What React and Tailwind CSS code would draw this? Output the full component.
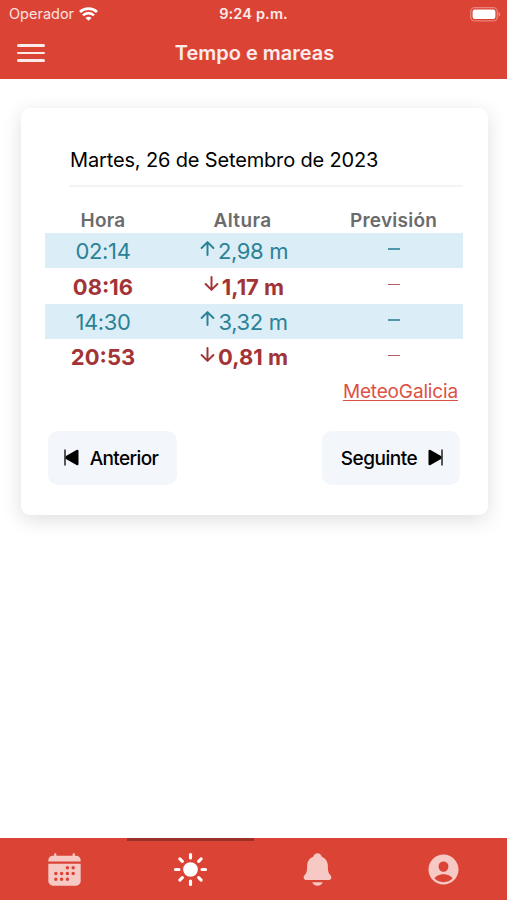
import { IoArrowDown, IoArrowUp, IoCalendar, IoNotifications, IoPersonCircle, IoSunny } from 'react-icons/io5';

const TIDES = [
  { time: '02:14', height: '2,98 m', high: true },
  { time: '08:16', height: '1,17 m', high: false },
  { time: '14:30', height: '3,32 m', high: true },
  { time: '20:53', height: '0,81 m', high: false },
];

const TABS = [
  { id: 'calendar', Icon: IoCalendar, pad: 'pl-[2px]' },
  { id: 'weather', Icon: IoSunny, pad: 'pl-px' },
  { id: 'alerts', Icon: IoNotifications, pad: 'pl-px' },
  { id: 'profile', Icon: IoPersonCircle, pad: 'pr-px' },
];

function WifiIcon() {
  return (
    <svg width="19" height="14" viewBox="0 0 19 14" fill="none" stroke="white" strokeWidth="2.6">
      <path d="M1 5C5.6 0.5 13.4 0.5 18 5" />
      <path d="M4 8.4C7.2 5.4 11.8 5.4 15 8.4" />
      <path d="M6.5 10.9C8.2 9.2 10.8 9.2 12.5 10.9L9.5 13.8Z" fill="white" stroke="none" />
    </svg>
  );
}

function BatteryIcon() {
  return (
    <svg width="31" height="15" viewBox="0 0 31 15">
      <rect x="0.7" y="0.7" width="26.6" height="13.2" rx="4" fill="none" stroke="white" strokeOpacity="0.35" strokeWidth="1.3" />
      <rect x="2.6" y="2.6" width="22.8" height="9.4" rx="2.2" fill="white" />
      <path d="M28.7 5C30.6 5.6 30.6 9 28.7 9.6Z" fill="white" fillOpacity="0.45" />
    </svg>
  );
}

function SkipIcon({ className = '' }) {
  return (
    <svg className={className} width="15" height="17" viewBox="0 0 15 17">
      <path d="M1 0.5V16.5" stroke="black" strokeWidth="1.3" />
      <path d="M2 7L12.5 1Q14.5 0.2 14.5 2V15Q14.5 16.8 12.5 16L2 10Q0.6 8.5 2 7Z" />
    </svg>
  );
}

export default function App() {
  return (
    <div className="h-screen flex flex-col bg-white overflow-hidden font-['Inter',sans-serif] text-black">
      <header className="h-[79px] shrink-0 bg-[#db4335] text-white">
        <div className="h-7 grid grid-cols-3 items-center pl-[9px] pr-[6px]">
          <div className="flex items-center gap-[5px]">
            <span className="text-[14.5px] text-white/85">Operador</span>
            <WifiIcon />
          </div>
          <div className="-ml-[3px] text-center text-[14.5px] font-semibold text-white/90 tracking-[0.15px] whitespace-nowrap">9:24 p.m.</div>
          <div className="flex justify-end">
            <BatteryIcon />
          </div>
        </div>
        <div className="h-[50px] grid grid-cols-[60px_1fr_60px] items-center">
          <button className="ml-[17px] w-7 flex flex-col gap-[5px]">
            <span className="h-[2.5px] w-full rounded-full bg-white/90" />
            <span className="h-[2.5px] w-full rounded-full bg-white/90" />
            <span className="h-[2.5px] w-full rounded-full bg-white/90" />
          </button>
          <h1 className="pl-[2px] text-center text-[20px] font-semibold text-white/90">Tempo e mareas</h1>
        </div>
      </header>

      <main className="flex-1 pt-[29px] pl-[21px] pr-[19px]">
        <section className="h-[407px] rounded-[9px] bg-white pl-6 pr-[25px] shadow-[0_5px_20px_rgba(0,0,0,0.13)]">
          <div className="ml-[24px] h-[79px] pt-[37px] border-b-2 border-[#f4f4f5]">
            <h2 className="pl-px text-[20px] leading-[30px] tracking-[-0.15px] whitespace-nowrap">Martes, 26 de Setembro de 2023</h2>
          </div>

          <table className="mt-[21px] w-full table-fixed text-center">
            <thead>
              <tr className="h-[25px] text-[19px] leading-[25px] text-[#6b6b6b]">
                <th className="w-[116px] font-semibold tracking-[0.2px]">Hora</th>
                <th className="w-[163px] font-semibold tracking-[0.4px]">Altura</th>
                <th className="font-semibold tracking-[0.25px]">Previsión</th>
              </tr>
            </thead>
            <tbody>
              {TIDES.map(({ time, height, high }) => {
                const Arrow = high ? IoArrowUp : IoArrowDown;
                return (
                  <tr key={time} className={`h-[35.4px] text-[22px] leading-[35px] ${high ? 'bg-[#dbedf6] text-[#2b8296] tracking-[-0.35px]' : 'font-bold text-[#a23437]'}`}>
                    <td className="pt-px leading-[34px]">{time}</td>
                    <td className="pt-px leading-[34px]">
                      <div className="flex items-center justify-center">
                        <Arrow className="size-[21px] -mt-[6px]" />
                        <span>{height}</span>
                      </div>
                    </td>
                    <td>
                      <div className={`mx-auto mb-[3px] h-[1.5px] w-3 ${high ? 'bg-[#2b8296]/80' : 'bg-[#a23437]/80'}`} />
                    </td>
                  </tr>
                );
              })}
            </tbody>
          </table>

          <div className="h-[34px] pr-[5px] text-right">
            <a href="#" className="text-[19px] leading-[33px] tracking-[-0.15px] text-[#dd5145] underline decoration-1 underline-offset-2">MeteoGalicia</a>
          </div>

          <div className="mt-[22px] flex justify-between px-[3px]">
            <button className="flex h-[54px] w-[129px] items-center justify-center gap-[11px] rounded-[10px] bg-[#f3f6fa] pr-[3px] text-[19px] font-medium tracking-[-0.6px]">
              <SkipIcon />
              <span className="pt-[3px]">Anterior</span>
            </button>
            <button className="flex h-[54px] w-[138px] items-center justify-center gap-[11px] rounded-[10px] bg-[#f3f6fa] pl-[2px] text-[19px] font-medium tracking-[-0.5px]">
              <span className="pt-[3px]">Seguinte</span>
              <SkipIcon className="-scale-x-100" />
            </button>
          </div>
        </section>
      </main>

      <nav className="h-[62px] shrink-0 grid grid-cols-4 bg-[#db4335]">
        {TABS.map(({ id, Icon, pad }) => (
          <button
            key={id}
            className={`flex items-center justify-center border-t-[3px] pb-[2px] ${pad} ${id === 'weather' ? 'border-[#9b3028] text-white' : 'border-transparent text-[#f6c9c5]'}`}
          >
            <Icon className="size-[37px]" />
          </button>
        ))}
      </nav>
    </div>
  );
}
